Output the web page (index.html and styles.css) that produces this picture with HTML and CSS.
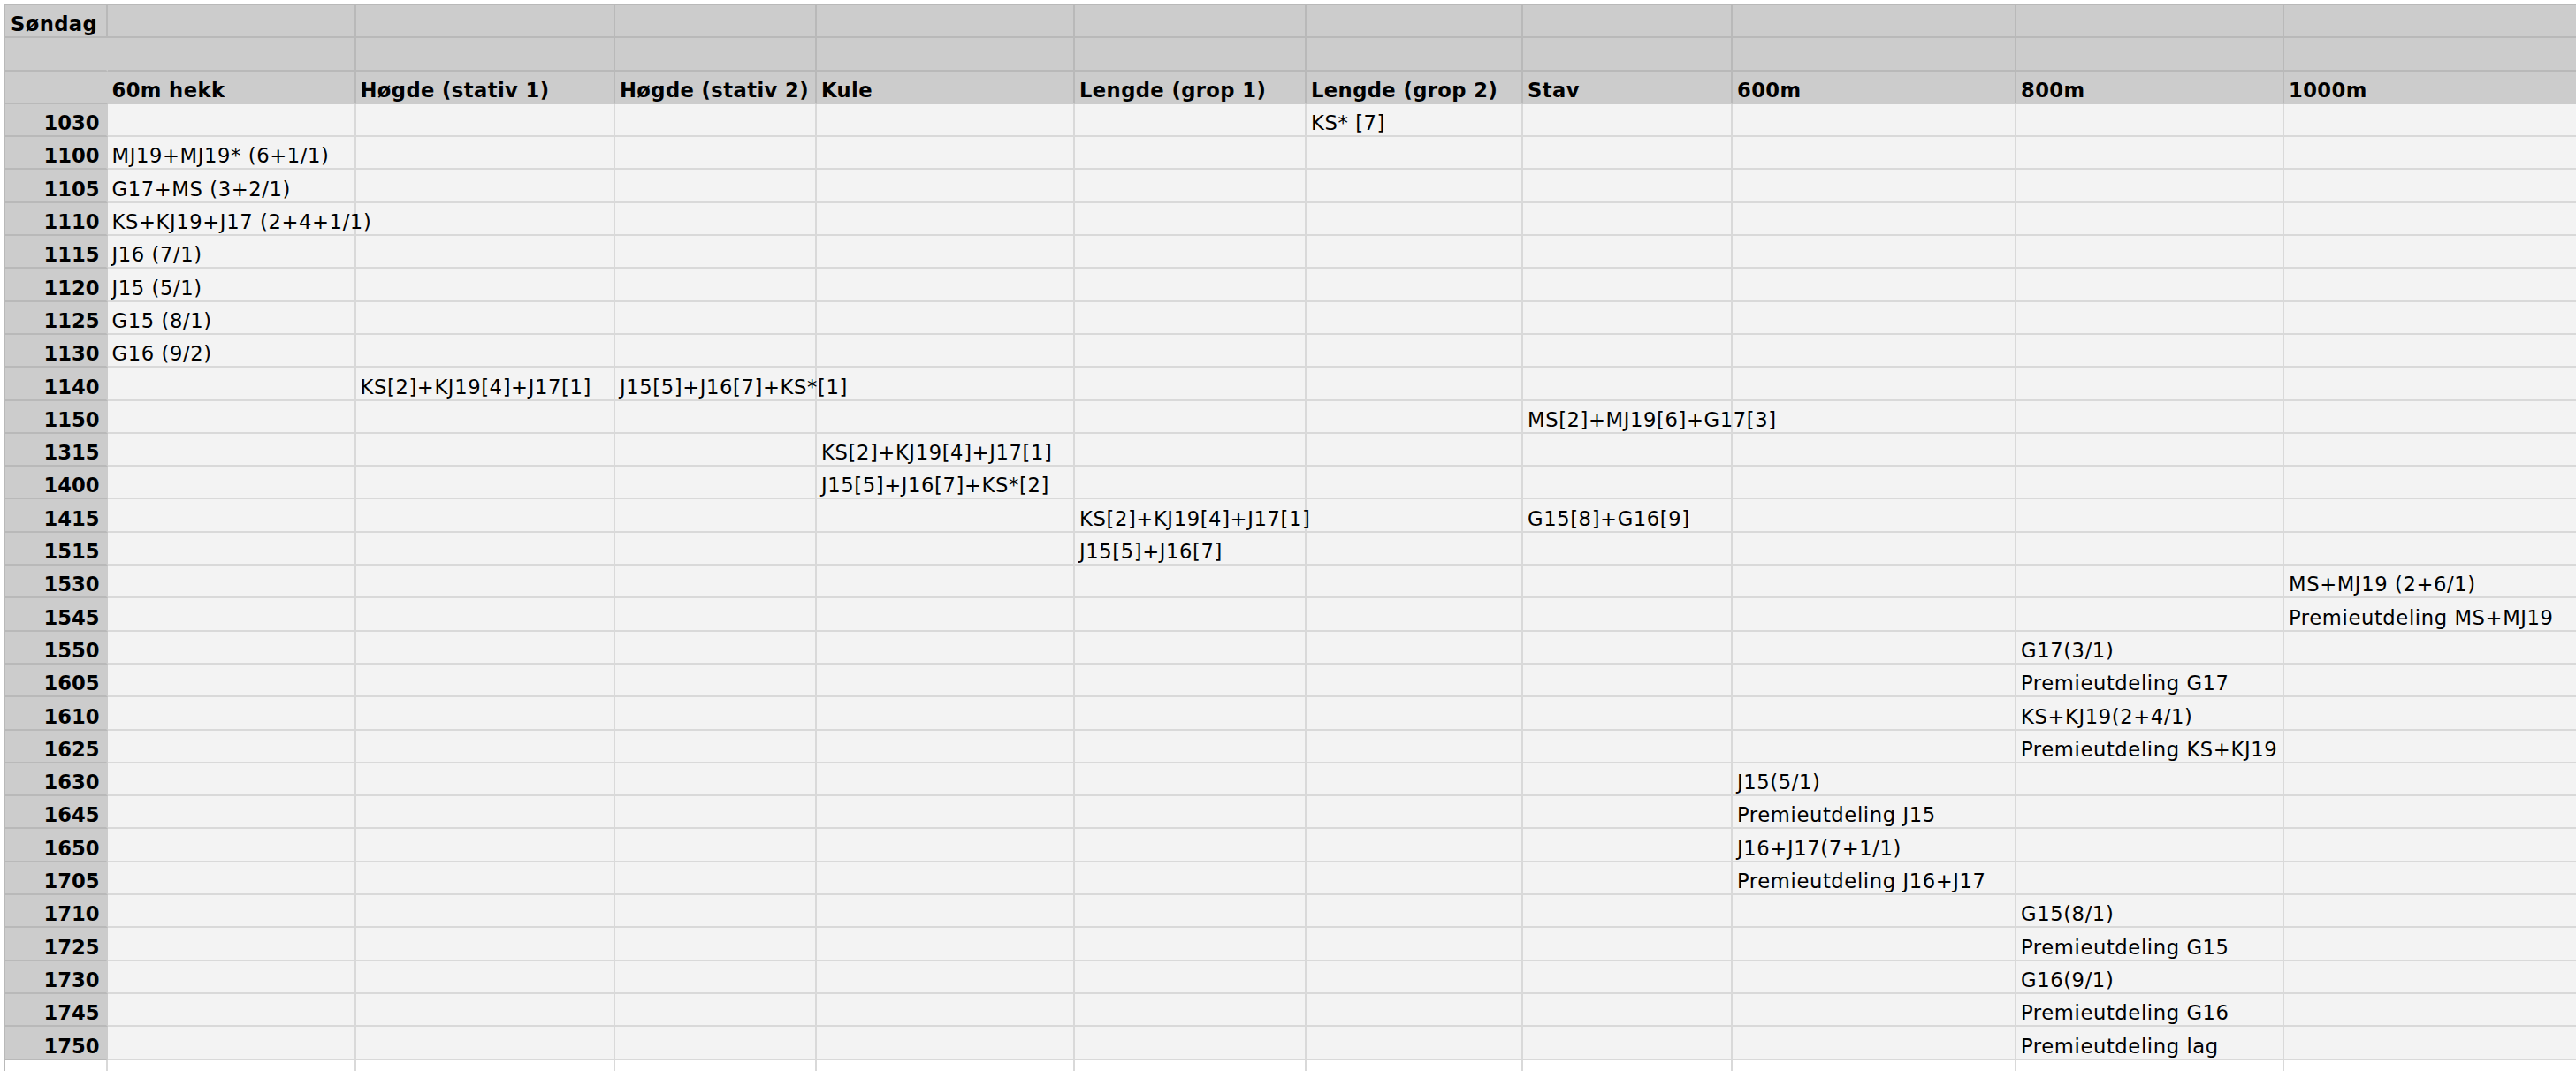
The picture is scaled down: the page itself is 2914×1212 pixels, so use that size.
FILE: index.html
```html
<!DOCTYPE html>
<html lang="no">
<head>
<meta charset="utf-8">
<title>Søndag</title>
<link rel="stylesheet" href="styles.css">
</head>
<body>
<table class="sheet">
<colgroup>
<col class="c0"><col class="c1"><col class="c2"><col class="c3"><col class="c4"><col class="c5"><col class="c6"><col class="c7"><col class="c8"><col class="c9"><col class="c10">
</colgroup>
<thead>
<tr class="hrow"><th class="lbl day">Søndag</th><th></th><th></th><th></th><th></th><th></th><th></th><th></th><th></th><th></th><th></th></tr>
<tr class="hrow"><th class="lbl"></th><th></th><th></th><th></th><th></th><th></th><th></th><th></th><th></th><th></th><th></th></tr>
<tr class="hrow last"><th class="lbl"></th><th>60m hekk</th><th>Høgde (stativ 1)</th><th>Høgde (stativ 2)</th><th>Kule</th><th>Lengde (grop 1)</th><th>Lengde (grop 2)</th><th>Stav</th><th>600m</th><th>800m</th><th>1000m</th></tr>
</thead>
<tbody>
<tr><th class="lbl">1030</th><td></td><td></td><td></td><td></td><td></td><td>KS* [7]</td><td></td><td></td><td></td><td></td></tr>
<tr><th class="lbl">1100</th><td>MJ19+MJ19* (6+1/1)</td><td></td><td></td><td></td><td></td><td></td><td></td><td></td><td></td><td></td></tr>
<tr><th class="lbl">1105</th><td>G17+MS (3+2/1)</td><td></td><td></td><td></td><td></td><td></td><td></td><td></td><td></td><td></td></tr>
<tr><th class="lbl">1110</th><td>KS+KJ19+J17 (2+4+1/1)</td><td></td><td></td><td></td><td></td><td></td><td></td><td></td><td></td><td></td></tr>
<tr><th class="lbl">1115</th><td>J16 (7/1)</td><td></td><td></td><td></td><td></td><td></td><td></td><td></td><td></td><td></td></tr>
<tr><th class="lbl">1120</th><td>J15 (5/1)</td><td></td><td></td><td></td><td></td><td></td><td></td><td></td><td></td><td></td></tr>
<tr><th class="lbl">1125</th><td>G15 (8/1)</td><td></td><td></td><td></td><td></td><td></td><td></td><td></td><td></td><td></td></tr>
<tr><th class="lbl">1130</th><td>G16 (9/2)</td><td></td><td></td><td></td><td></td><td></td><td></td><td></td><td></td><td></td></tr>
<tr><th class="lbl">1140</th><td></td><td>KS[2]+KJ19[4]+J17[1]</td><td>J15[5]+J16[7]+KS*[1]</td><td></td><td></td><td></td><td></td><td></td><td></td><td></td></tr>
<tr><th class="lbl">1150</th><td></td><td></td><td></td><td></td><td></td><td></td><td>MS[2]+MJ19[6]+G17[3]</td><td></td><td></td><td></td></tr>
<tr><th class="lbl">1315</th><td></td><td></td><td></td><td>KS[2]+KJ19[4]+J17[1]</td><td></td><td></td><td></td><td></td><td></td><td></td></tr>
<tr><th class="lbl">1400</th><td></td><td></td><td></td><td>J15[5]+J16[7]+KS*[2]</td><td></td><td></td><td></td><td></td><td></td><td></td></tr>
<tr><th class="lbl">1415</th><td></td><td></td><td></td><td></td><td>KS[2]+KJ19[4]+J17[1]</td><td></td><td>G15[8]+G16[9]</td><td></td><td></td><td></td></tr>
<tr><th class="lbl">1515</th><td></td><td></td><td></td><td></td><td>J15[5]+J16[7]</td><td></td><td></td><td></td><td></td><td></td></tr>
<tr><th class="lbl">1530</th><td></td><td></td><td></td><td></td><td></td><td></td><td></td><td></td><td></td><td>MS+MJ19 (2+6/1)</td></tr>
<tr><th class="lbl">1545</th><td></td><td></td><td></td><td></td><td></td><td></td><td></td><td></td><td></td><td>Premieutdeling MS+MJ19</td></tr>
<tr><th class="lbl">1550</th><td></td><td></td><td></td><td></td><td></td><td></td><td></td><td></td><td>G17(3/1)</td><td></td></tr>
<tr><th class="lbl">1605</th><td></td><td></td><td></td><td></td><td></td><td></td><td></td><td></td><td>Premieutdeling G17</td><td></td></tr>
<tr><th class="lbl">1610</th><td></td><td></td><td></td><td></td><td></td><td></td><td></td><td></td><td>KS+KJ19(2+4/1)</td><td></td></tr>
<tr><th class="lbl">1625</th><td></td><td></td><td></td><td></td><td></td><td></td><td></td><td></td><td>Premieutdeling KS+KJ19</td><td></td></tr>
<tr><th class="lbl">1630</th><td></td><td></td><td></td><td></td><td></td><td></td><td></td><td>J15(5/1)</td><td></td><td></td></tr>
<tr><th class="lbl">1645</th><td></td><td></td><td></td><td></td><td></td><td></td><td></td><td>Premieutdeling J15</td><td></td><td></td></tr>
<tr><th class="lbl">1650</th><td></td><td></td><td></td><td></td><td></td><td></td><td></td><td>J16+J17(7+1/1)</td><td></td><td></td></tr>
<tr><th class="lbl">1705</th><td></td><td></td><td></td><td></td><td></td><td></td><td></td><td>Premieutdeling J16+J17</td><td></td><td></td></tr>
<tr><th class="lbl">1710</th><td></td><td></td><td></td><td></td><td></td><td></td><td></td><td></td><td>G15(8/1)</td><td></td></tr>
<tr><th class="lbl">1725</th><td></td><td></td><td></td><td></td><td></td><td></td><td></td><td></td><td>Premieutdeling G15</td><td></td></tr>
<tr><th class="lbl">1730</th><td></td><td></td><td></td><td></td><td></td><td></td><td></td><td></td><td>G16(9/1)</td><td></td></tr>
<tr><th class="lbl">1745</th><td></td><td></td><td></td><td></td><td></td><td></td><td></td><td></td><td>Premieutdeling G16</td><td></td></tr>
<tr><th class="lbl">1750</th><td></td><td></td><td></td><td></td><td></td><td></td><td></td><td></td><td>Premieutdeling lag</td><td></td></tr>
<tr class="blank"><td></td><td></td><td></td><td></td><td></td><td></td><td></td><td></td><td></td><td></td><td></td></tr>
</tbody>
</table>
</body>
</html>
```

FILE: styles.css
```css
html, body {
  margin: 0;
  padding: 0;
  background: #ffffff;
  overflow: hidden;
}

body {
  font-family: "DejaVu Sans", "Liberation Sans", sans-serif;
  font-size: 22.67px;
  color: #000;
}

.sheet {
  table-layout: fixed;
  border-collapse: separate;
  border-spacing: 0;
  width: 2917px;
  margin: 4px 0 0 4px;
  border-top: 2px solid #b9b9b9;
  border-left: 2px solid #b9b9b9;
}

.c0 { width: 115.5px; }
.c1 { width: 281px; }
.c2 { width: 293.5px; }
.c3 { width: 228px; }
.c4 { width: 292px; }
.c5 { width: 262px; }
.c6 { width: 245px; }
.c7 { width: 237px; }
.c8 { width: 321px; }
.c9 { width: 303px; }
.c10 { width: 338px; }

.sheet th,
.sheet td {
  box-sizing: border-box;
  height: 37.3px;
  padding: 0 5px 1px 5px;
  vertical-align: bottom;
  text-align: left;
  white-space: nowrap;
  overflow: visible;
  line-height: normal;
  border-right: 2px solid #d9d9d9;
  border-bottom: 2px solid #d9d9d9;
}

.sheet td {
  background: #f3f3f3;
  font-weight: normal;
  letter-spacing: 0.6px;
}

.hrow th {
  background: #cccccc;
  font-weight: bold;
  letter-spacing: 0.4px;
  border-right-color: #b9b9b9;
  border-bottom-color: #b9b9b9;
}

.hrow.last th {
  border-bottom-color: #cccccc;
}

.hrow.last th.lbl {
  border-bottom-color: #b9b9b9;
}

.sheet th.lbl {
  background: #cccccc;
  font-weight: bold;
  text-align: right;
  padding-right: 7px;
  border-right-color: #cccccc;
  border-bottom-color: #b9b9b9;
}

.sheet th.day {
  text-align: left;
  padding-left: 6px;
  border-right-color: #b9b9b9;
}

.sheet tr.blank td {
  background: #ffffff;
}
```
